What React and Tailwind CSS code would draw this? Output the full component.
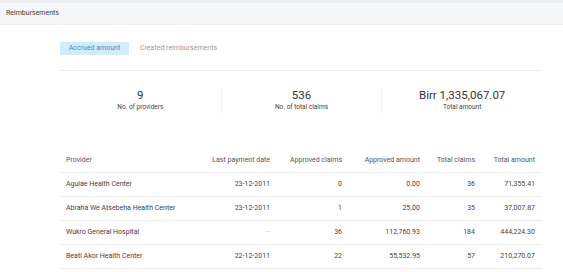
const rows = [
  { name: "Agulae Health Center", date: "23-12-2011", ac: "0", aa: "0.00", tc: "36", ta: "71,355.41" },
  { name: "Abraha We Atsebeha Health Center", date: "23-12-2011", ac: "1", aa: "25.00", tc: "35", ta: "37,007.87" },
  { name: "Wukro General Hospital", date: "--", ac: "36", aa: "112,760.93", tc: "184", ta: "444,224.30" },
  { name: "Beati Akor Health Center", date: "22-12-2011", ac: "22", aa: "55,532.95", tc: "57", ta: "210,270.07" },
];

const stats = [
  { value: "9", label: "No. of providers" },
  { value: "536", label: "No. of total claims" },
  { value: "Birr 1,335,067.07", label: "Total amount" },
];

export default function App() {
  return (
    <div className="w-[563px] h-[272px] overflow-hidden bg-white text-[#3b3b3b] font-['Roboto',sans-serif]">
      <div className="h-[3px] bg-[#eceef1]" />
      <div className="h-[22px] flex items-center px-[6px] bg-[#f6f7f9] border-b border-[#eef0f2] text-[7px]">
        Reimbursements
      </div>

      <div className="ml-[60px] w-[482px]">
        <div className="flex items-center gap-[11px] pt-[17px] text-[7px]">
          <div className="h-[13px] w-[69px] flex items-center justify-center bg-[#d3ecfb] text-[#3f8fc9] rounded-[1px]">
            Accrued amount
          </div>
          <div className="text-[#9a9a9a]">Created reimbursements</div>
        </div>

        <div className="mt-[15px] border-t border-[#ececec]" />

        <div className="grid grid-cols-3 mt-[17px]">
          {stats.map((s, i) => (
            <div
              key={s.label}
              className={`flex flex-col items-center h-[25px] ${i > 0 ? "border-l border-[#f0f0f0]" : ""}`}
            >
              <div className="text-[11.5px] leading-[14px] text-[#333]">{s.value}</div>
              <div className="text-[6.5px] leading-[9px] mt-[1px] text-[#444]">{s.label}</div>
            </div>
          ))}
        </div>

        <table className="table-fixed w-[482px] mt-[35px] text-[7px] border-collapse">
          <colgroup>
            <col className="w-[145px]" />
            <col className="w-[72px]" />
            <col className="w-[72px]" />
            <col className="w-[78px]" />
            <col className="w-[55px]" />
            <col className="w-[60px]" />
          </colgroup>
          <thead>
            <tr className="h-[24px] border-b border-[#ececec] text-[#555]">
              <th className="font-normal text-left pl-[6px]">Provider</th>
              <th className="font-normal text-right pr-[7px]">Last payment date</th>
              <th className="font-normal text-right pr-[7px]">Approved claims</th>
              <th className="font-normal text-right pr-[7px]">Approved amount</th>
              <th className="font-normal text-right pr-[7px]">Total claims</th>
              <th className="font-normal text-right pr-[7px]">Total amount</th>
            </tr>
          </thead>
          <tbody>
            {rows.map((r) => (
              <tr key={r.name} className="h-[24px] border-b border-[#ececec] text-[#444]">
                <td className="pl-[6px] whitespace-nowrap">{r.name}</td>
                <td className={`text-right pr-[7px] ${r.date === "--" ? "text-[#c8c8c8]" : ""}`}>{r.date}</td>
                <td className="text-right pr-[7px]">{r.ac}</td>
                <td className="text-right pr-[7px]">{r.aa}</td>
                <td className="text-right pr-[7px]">{r.tc}</td>
                <td className="text-right pr-[7px]">{r.ta}</td>
              </tr>
            ))}
          </tbody>
        </table>
      </div>
    </div>
  );
}
